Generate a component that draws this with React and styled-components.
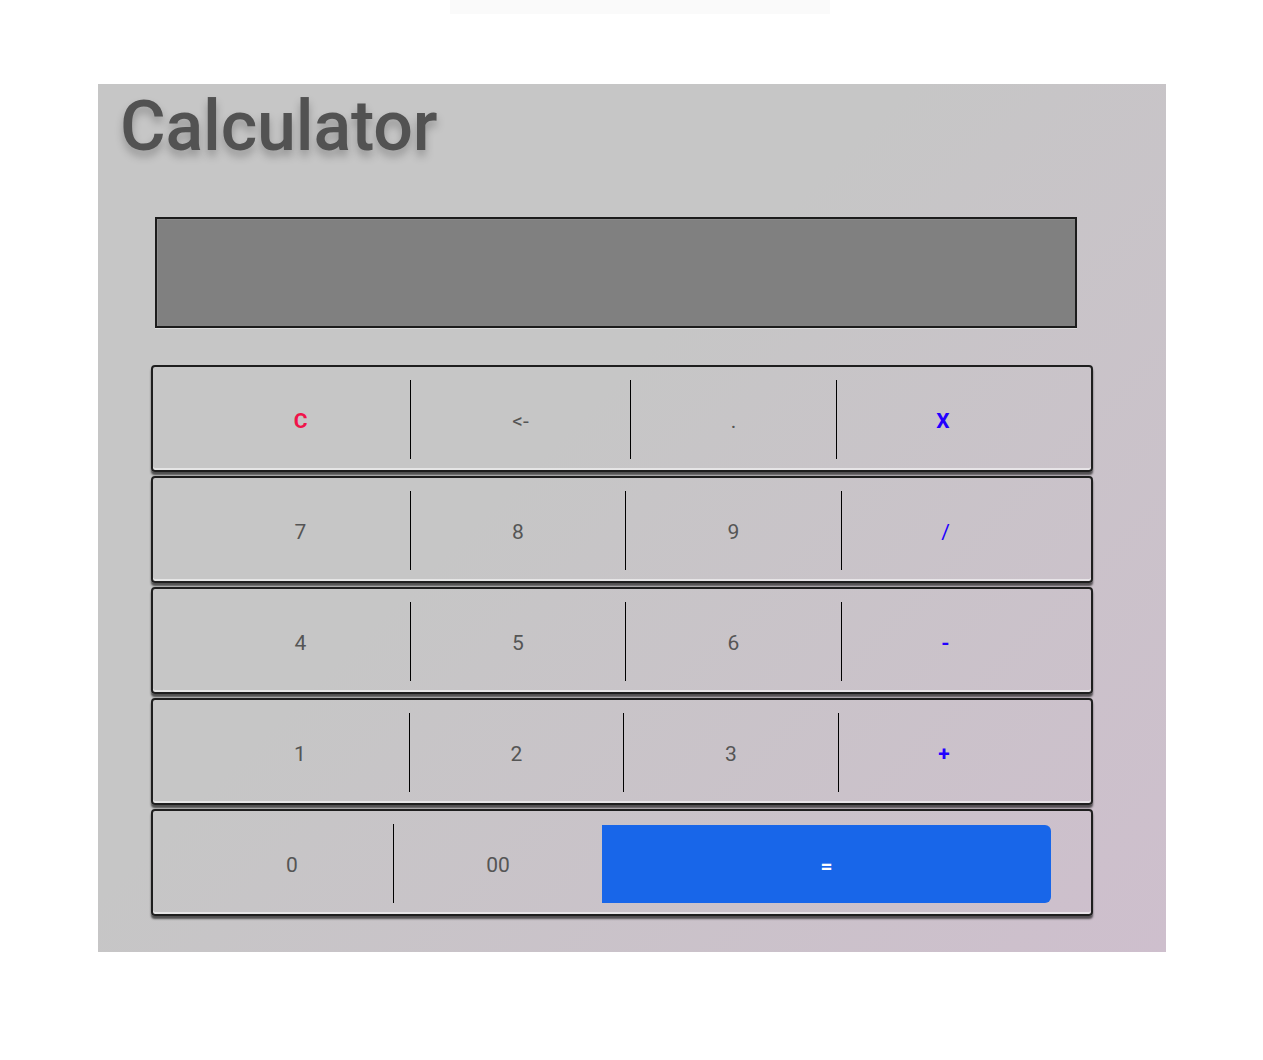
import styled, { createGlobalStyle } from "styled-components";

const GlobalStyle = createGlobalStyle`
	body{
		margin : 0;
		background : #fff;
		font-family : Roboto, "Liberation Sans", sans-serif;
	}
	*{
		box-sizing : border-box;
	}
`

// 상단 얇은 띠
const TopStrip = styled.div`
	width : 380px;
	height : 14px;
	margin-left : 450px;
	background : #fafafa;
`

// 계산기 전체 패널
const Panel = styled.div`
	width : 1068px;
	height : 868px;
	margin : 70px 0 0 98px;
	padding-top : 1px;
	background : linear-gradient(135deg, #c6c6c6 42%, #cebfcd 100%);
`
const Title = styled.h1`
	margin : 0;
	padding-left : 22px;
	font-size : 70px;
	line-height : 82px;
	font-weight : 500;
	letter-spacing : -0.2px;
	color : #525252;
	text-shadow : 0 6px 8px rgba(0, 0, 0, 0.25);
`

// 결과 표시창
const Display = styled.div`
	width : 922px;
	height : 111px;
	margin : 50px 0 0 57px;
	border : 2px solid #1c1c1c;
	background : #808080;
	box-shadow : inset 1px 1px 0 #8c8c8c, 0 1px 0 #dcdcdc;
`

// 버튼 영역
const Keypad = styled.div`
	display : flex;
	flex-direction : column;
	gap : 4px;
	width : 942px;
	margin : 37px 0 0 53px;
`
const Row = styled.div`
	display : flex;
	align-items : flex-start;
	height : 107px;
	padding : 13px 42px 0 38px;
	border : 2px solid #1e1e1e;
	border-radius : 4px;
	box-shadow : inset 0 -2px 0 rgba(255, 255, 255, 0.55), 0 3px 2px rgba(0, 0, 0, 0.6);
`
const Key = styled.button`
	flex : ${({ $w }) => ($w ? `0 0 ${$w}px` : "1 1 0")};
	height : 79px;
	padding : 3px 0 0;
	border : 0;
	border-right : ${({ $divider }) => ($divider ? "1px solid #000" : "0")};
	background : transparent;
	font-family : Roboto, "Liberation Sans", sans-serif;
	font-size : 21px;
	font-weight : ${({ $bold }) => ($bold ? 700 : 400)};
	color : ${({ $color }) => $color || "#555"};
	text-align : center;
	cursor : pointer;
`
const EqualKey = styled(Key)`
	height : 78px;
	margin-top : 1px;
	border-radius : 0 6px 6px 0;
	background : #1866e9;
	color : #fff;
	font-weight : 700;
`

const RED = "#f0144a"
const BLUE = "#2200ff"

const rows = [
	[
		{ label : "C", w : 220, color : RED, bold : true },
		{ label : "<-", w : 220 },
		{ label : ".", w : 206 },
		{ label : "X", color : BLUE, bold : true },
	],
	[
		{ label : "7", w : 220 },
		{ label : "8", w : 215 },
		{ label : "9", w : 216 },
		{ label : "/", color : BLUE },
	],
	[
		{ label : "4", w : 220 },
		{ label : "5", w : 215 },
		{ label : "6", w : 216 },
		{ label : "-", color : BLUE, bold : true },
	],
	[
		{ label : "1", w : 219 },
		{ label : "2", w : 214 },
		{ label : "3", w : 215 },
		{ label : "+", color : BLUE, bold : true },
	],
]

function App() {
	return (
		<>
			<GlobalStyle />
			<TopStrip />
			<Panel>
				<Title>Calculator</Title>
				<Display />
				<Keypad>
					{rows.map((row, i) => (
						<Row key={i}>
							{row.map((k, j) => (
								<Key
									key={k.label}
									$w={k.w}
									$color={k.color}
									$bold={k.bold}
									$divider={j < row.length - 1}
								>
									{k.label}
								</Key>
							))}
						</Row>
					))}
					<Row>
						<Key $w={203} $divider>0</Key>
						<Key $w={208}>00</Key>
						<EqualKey $w={449}>=</EqualKey>
					</Row>
				</Keypad>
			</Panel>
		</>
	)
}

export default App
